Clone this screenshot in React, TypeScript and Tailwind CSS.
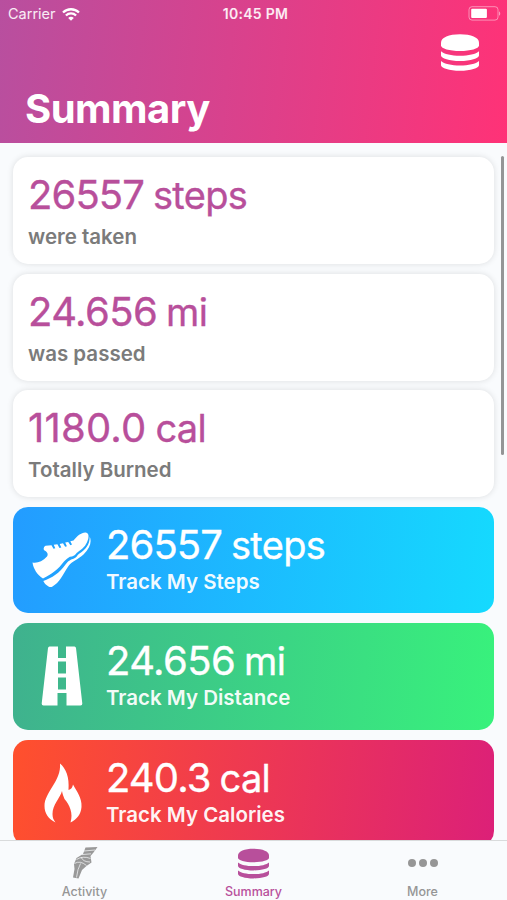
import React from "react";

type IconProps = { className?: string };

const DatabaseIcon: React.FC<IconProps> = ({ className }) => (
    <svg className={className} viewBox="0 0 38 37" fill="currentColor">
        <path d="M0 8.500C0 3.500 8 0.300 19 0.300S38 3.500 38 8.500v3C38 14.500 29.500 17 19 17S0 14.500 0 11.500z" />
        <path d="M0 17.200C3 20 10.500 21.700 19 21.700S35 20 38 17.200v4.300C38 24.300 29.500 27 19 27S0 24.300 0 21.500z" />
        <path d="M0 27C3 29.800 10.500 31.500 19 31.500S35 29.800 38 27v4.300C38 34.100 29.500 36.800 19 36.800S0 34.100 0 31.300z" />
    </svg>
);

const WifiIcon: React.FC<IconProps> = ({ className }) => (
    <svg className={className} viewBox="0 0 18 13" fill="none" stroke="currentColor" strokeWidth={2.3}>
        <path d="M1 4.500a11.500 11.500 0 0 1 16 0" />
        <path d="M3.900 7.500a7.300 7.300 0 0 1 10.200 0" />
        <path d="M9 12.800L6.200 10a3.900 3.900 0 0 1 5.600 0z" fill="currentColor" stroke="none" />
    </svg>
);

const BatteryIcon: React.FC<IconProps> = ({ className }) => (
    <svg className={className} viewBox="0 0 33 15">
        <rect x="1" y="0.700" width="29" height="13.400" rx="3" fill="none" stroke="white" strokeOpacity="0.450" />
        <rect x="3.200" y="2.800" width="15.700" height="9.200" rx="1" fill="white" />
        <path d="M31 5.200v4.600c1.700-.8 1.700-3.800 0-4.600z" fill="white" fillOpacity="0.500" />
    </svg>
);

const ShoeIcon: React.FC<IconProps> = ({ className }) => (
    <svg className={className} viewBox="0 0 60 56" fill="currentColor">
        <path d="M0.500 30.500C5 31.500 10.500 29.500 15 24.500C16.500 22.500 15.500 20 12.500 18.500C11 17.500 11.500 15 13.500 13.800L19.500 13.300L21.500 16.800L23.300 16.300L21.700 12.800L25.400 12.300L27.500 16L29.300 15.400L27.700 11.900L31 11.300L33.200 14.800L34.900 14.200L33.200 10.600L36.200 9.900L38.400 13.300L40 12.500L38.300 9.200L41.500 8.500C45 4 49.500 0.300 53.500 0.500C56.500 0.800 57 3.500 56.200 7C55.200 11.500 52 16 46.500 19.500C44 21.200 43.500 23.500 40 24.500C37 24.500 35 26.500 32 29.500C26 37.500 20 42 11 46.500C5 42.500 1.500 37 0.500 30.500z" />
        <path d="M57.700 4.500C60 10 58 16 51.500 22.500C46 27.500 39.500 29.500 36.500 34C30.500 43 27.500 50.500 20.500 54.500C17.500 56.500 13 52.500 11.300 49C20 46 27.500 41 33.500 32.500C36.500 28.500 39 27.500 42 26.500C45 25.500 44.500 23.500 47.500 21.500C54 17.500 58 12 57.700 4.500z" />
    </svg>
);

const RoadIcon: React.FC<IconProps> = ({ className }) => (
    <svg className={className} viewBox="0 0 42 60" fill="currentColor">
        <path fillRule="evenodd" d="M8.500 0.500H17V12H25V0.500H33.500Q34.700 0.500 35 2L41.300 57.500Q41.500 59.500 39.500 59.500H25.500V47H16.500V59.500H2.500Q0.500 59.500 0.700 57.500L7 2Q7.300 0.500 8.500 0.500zM17 15.500V27.500H25V15.500zM17 31.500V43.500H25V31.500z" />
    </svg>
);

const FlameIcon: React.FC<IconProps> = ({ className }) => (
    <svg className={className} viewBox="0 0 38 60" fill="currentColor">
        <path d="M16 0.500C22 5.500 25.500 14 24.500 27C27 26.500 28.500 24.500 29 21.500C32.500 28 38 34.500 37.500 44C37 51 33 56.500 26.500 59.500C29.500 50 25.500 42 20.500 36C19.500 33.500 18.500 31 18 28C16 35 8.500 42 8.500 51C8.500 54.500 9.500 57 11.500 59.500C4.500 56 0.500 50.500 0.500 43C0.500 29 17.500 18 16 0.500z" />
    </svg>
);

const KneeIcon: React.FC<IconProps> = ({ className }) => (
    <svg className={className} viewBox="0 0 26 34">
        <path d="M13.500 1.500L25.500 1L21.500 6.500L18.500 10L19.500 16.500L14.500 20L10 24L6.500 32.500L1 31.500L2.500 23L2 18L4.500 12L11 8z" fill="#999" />
        <path d="M12 5L23 4M10 8.600L19 7.800M4.500 13.500Q11 9.500 18.500 12.500M9 11Q11 16 18 16M2.500 17.500Q8 14 14.500 19.500M8.500 17.500Q5.500 23 4.500 31.500" fill="none" stroke="#f9fbfc" strokeWidth="0.700" />
    </svg>
);

const DotsIcon: React.FC<IconProps> = ({ className }) => (
    <svg className={className} viewBox="0 0 30 8" fill="currentColor">
        <circle cx="4" cy="4" r="4" />
        <circle cx="15" cy="4" r="4" />
        <circle cx="26" cy="4" r="4" />
    </svg>
);

type ValueProps = { amount: string; unit: string; tracking: string };

const Value: React.FC<ValueProps> = ({ amount, unit, tracking }) => (
    <p className="flex items-baseline gap-[9px] text-[40px] leading-[47px] [-webkit-text-stroke:0.35px_currentColor]">
        <span className={tracking}>{amount}</span>
        <span className="text-[38px] tracking-[-0.7px]">{unit}</span>
    </p>
);

const stats = [
    { amount: "26557", unit: "steps", label: "were taken", tracking: "tracking-[-0.9px]" },
    { amount: "24.656", unit: "mi", label: "was passed", tracking: "tracking-[-0.6px]" },
    { amount: "1180.0", unit: "cal", label: "Totally Burned", tracking: "tracking-[0.2px]" },
];

const trackers = [
    {
        amount: "26557",
        unit: "steps",
        tracking: "tracking-[-0.9px]",
        label: "Track My Steps",
        color: "from-[#239cff] to-[#15dafe]",
        icon: <ShoeIcon className="w-[60px] h-14" />,
    },
    {
        amount: "24.656",
        unit: "mi",
        tracking: "tracking-[-0.6px]",
        label: "Track My Distance",
        color: "from-[#3fb18e] to-[#38f27c]",
        icon: <RoadIcon className="w-[42px] h-[60px]" />,
    },
    {
        amount: "240.3",
        unit: "cal",
        tracking: "tracking-[-0.9px]",
        label: "Track My Calories",
        color: "from-[#ff502d] to-[#dc2078]",
        icon: <FlameIcon className="w-[38px] h-[60px] ml-px" />,
    },
];

const App: React.FC = () => {
    return (
        <div className="w-[507px] h-[900px] flex flex-col overflow-hidden bg-[#f9fbfd] font-['Inter',sans-serif]">
            <header className="h-[143px] shrink-0 flex flex-col bg-linear-[96deg] from-[#b84f9f] to-[#ff3277] text-white">
                <div className="h-[27px] grid grid-cols-3 items-center pl-2 pr-[6px] text-[14.500px] leading-none">
                    <div className="flex items-center gap-[6px] pt-px">
                        <span className="text-white/90">Carrier</span>
                        <WifiIcon className="w-[18px] h-[13px]" />
                    </div>
                    <span className="justify-self-center pt-px pl-[2px] font-semibold text-[14px] tracking-[0.3px] whitespace-nowrap text-white/90">10:45 PM</span>
                    <BatteryIcon className="w-[33px] h-[15px] justify-self-end" />
                </div>
                <div className="flex justify-end pt-[7px] pr-7">
                    <DatabaseIcon className="w-[38px] h-[37px]" />
                </div>
                <h1 className="pl-[25px] pt-[13px] text-[40px] leading-[50px] font-bold tracking-[-0.5px]">Summary</h1>
            </header>

            <main className="flex-1 min-h-0 flex overflow-hidden pt-[14px]">
                <div className="w-[481px] ml-[13px] shrink-0 flex flex-col gap-[9.500px]">
                    {stats.map((s) => (
                        <div
                            key={s.label}
                            className="h-[107px] shrink-0 rounded-[15px] bg-white pl-[15px] pt-[14px] shadow-[0_0_6px_rgba(0,0,0,0.12)]"
                        >
                            <div className="text-[#b84f9b]">
                                <Value amount={s.amount} unit={s.unit} tracking={s.tracking} />
                            </div>
                            <p className="mt-[6px] text-[20.500px] leading-6 font-semibold text-[#7b7b7b]">{s.label}</p>
                        </div>
                    ))}
                    {trackers.map((t) => (
                        <div
                            key={t.label}
                            className={`h-[106.500px] mb-[0.500px] shrink-0 flex rounded-[15px] bg-linear-[96deg] text-white ${t.color}`}
                        >
                            <div className="w-[93px] flex items-center justify-center pl-[5px]">{t.icon}</div>
                            <div className="pt-[14px]">
                                <Value amount={t.amount} unit={t.unit} tracking={t.tracking} />
                                <p className="mt-px text-[20.500px] leading-6 font-semibold text-white/95">{t.label}</p>
                            </div>
                        </div>
                    ))}
                </div>
                <div className="w-[3px] h-[299px] ml-[7px] -mt-px rounded-full bg-[#949596]" />
            </main>

            <nav className="h-[60px] shrink-0 grid grid-cols-3 border-t border-[#d9dbdc] bg-[#f9fbfd] text-[12.500px] leading-4 font-medium text-[#969696]">
                <div className="flex flex-col items-center">
                    <KneeIcon className="w-[26px] h-[34px] mt-[5px]" />
                    <span className="mt-1">Activity</span>
                </div>
                <div className="flex flex-col items-center text-[#b84f9b]">
                    <DatabaseIcon className="w-[31px] h-[31px] mt-[7px]" />
                    <span className="mt-[5px]">Summary</span>
                </div>
                <div className="flex flex-col items-center">
                    <DotsIcon className="w-[30px] h-2 mt-[18px]" />
                    <span className="mt-[17px]">More</span>
                </div>
            </nav>
        </div>
    );
};

export default App;
